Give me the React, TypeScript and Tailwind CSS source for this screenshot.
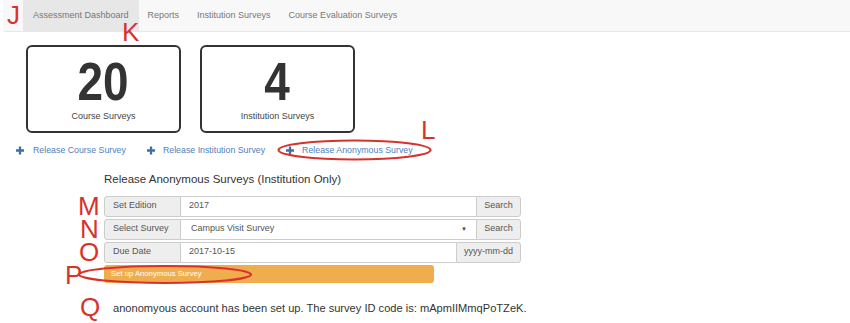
const SANS = { fontFamily: '"Liberation Sans", Arial, sans-serif' };

function Plus() {
  return (
    <svg width="8" height="9" viewBox="0 0 8 9" className="shrink-0">
      <path d="M4 0.5v8M0 4.5h8" stroke="#3c6fb0" strokeWidth="2.3" />
    </svg>
  );
}

function StatCard({ value, label }: { value: string; label: string }) {
  return (
    <div className="w-[155px] h-[88px] border-2 border-[#333] rounded-[6px] flex flex-col items-center">
      <div className="mt-[12px] text-[54px] leading-[44px] font-bold text-[#333] scale-x-[0.85]">{value}</div>
      <div className="mt-[9px] text-[9px] leading-none text-[#444]">{label}</div>
    </div>
  );
}

function Row({ label, children, addon, addonW }: { label: string; children: React.ReactNode; addon: string; addonW: string }) {
  return (
    <div className="flex h-[21px] text-[9px]">
      <div className="w-[77px] bg-[#eee] border border-[#ccc] rounded-l-[3px] flex items-center pl-[8px] text-[#555]">{label}</div>
      <div className="flex-1 border-y border-[#ccc] bg-white flex items-center pl-[8px] pr-[9px] text-[#555]">{children}</div>
      <div className={`${addonW} bg-[#eee] border border-[#ccc] rounded-r-[3px] flex items-center justify-center text-[#555]`}>{addon}</div>
    </div>
  );
}

function Letter({ ch, cls }: { ch: string; cls: string }) {
  return <div className={`absolute text-[#d8322c] text-[26px] leading-[20px] ${cls}`}>{ch}</div>;
}

export default function App() {
  return (
    <div className="relative w-[850px] h-[323px] bg-white overflow-hidden" style={SANS}>
      {/* nav */}
      <div className="ml-[3px] h-[32px] bg-[#f8f8f8] border-b border-[#e7e7e7] rounded-l-[3px] flex items-stretch pl-[20px] text-[9px] text-[#777]">
        <div className="bg-[#e7e7e7] px-[10px] flex items-center">Assessment Dashboard</div>
        <div className="px-[9px] flex items-center">Reports</div>
        <div className="px-[9px] flex items-center">Institution Surveys</div>
        <div className="px-[9px] flex items-center">Course Evaluation Surveys</div>
      </div>

      {/* stat cards */}
      <div className="flex gap-[19px] pl-[26px] pt-[13px]">
        <StatCard value="20" label="Course Surveys" />
        <StatCard value="4" label="Institution Surveys" />
      </div>

      {/* release links */}
      <div className="flex items-center pl-[16px] mt-[11px] text-[8.8px] text-[#4f7fbb]">
        <div className="flex items-center gap-[9px]"><Plus />Release Course Survey</div>
        <div className="flex items-center gap-[8px] ml-[21px]"><Plus />Release Institution Survey</div>
        <div className="flex items-center gap-[8px] ml-[21px]"><Plus />Release Anonymous Survey</div>
      </div>

      {/* form */}
      <div className="pl-[104px] w-[521px] mt-[17px]">
        <div className="text-[11.5px] text-[#333] leading-none">Release Anonymous Surveys (Institution Only)</div>
        <div className="mt-[10px] flex flex-col gap-[2px]">
          <Row label="Set Edition" addon="Search" addonW="w-[45px]">2017</Row>
          <Row label="Select Survey" addon="Search" addonW="w-[45px]">
            <span className="flex-1 pl-[2px]">Campus Visit Survey</span>
            <span className="text-[6px] text-[#444]">▼</span>
          </Row>
          <Row label="Due Date" addon="yyyy-mm-dd" addonW="w-[65px]">2017-10-15</Row>
        </div>
        <div className="mt-[2px] w-[330px] h-[18px] bg-[#f0ad4e] rounded-[3px] flex items-center pl-[7px] text-[7.7px] text-white">
          Set up Anonymous Survey
        </div>
      </div>

      <div className="pl-[113px] mt-[20px] text-[11.1px] text-[#333] leading-none">
        anonomyous account has been set up. The survey ID code is: mApmIIMmqPoTZeK.
      </div>

      {/* annotations */}
      <Letter ch="J" cls="left-[7px] top-[5px]" />
      <Letter ch="K" cls="left-[122px] top-[22px]" />
      <Letter ch="L" cls="left-[421px] top-[120px]" />
      <Letter ch="M" cls="left-[78px] top-[196px]" />
      <Letter ch="N" cls="left-[80px] top-[219px]" />
      <Letter ch="O" cls="left-[79px] top-[242px]" />
      <Letter ch="P" cls="left-[65px] top-[265px]" />
      <Letter ch="Q" cls="left-[80px] top-[297px]" />
      <svg className="absolute left-0 top-0 pointer-events-none" width="850" height="323">
        <ellipse cx="354.5" cy="150" rx="76" ry="9.5" fill="none" stroke="#d8322c" strokeWidth="2.2" />
        <ellipse cx="165" cy="274.5" rx="86" ry="8.5" fill="none" stroke="#d8322c" strokeWidth="2.2" />
      </svg>
    </div>
  );
}
